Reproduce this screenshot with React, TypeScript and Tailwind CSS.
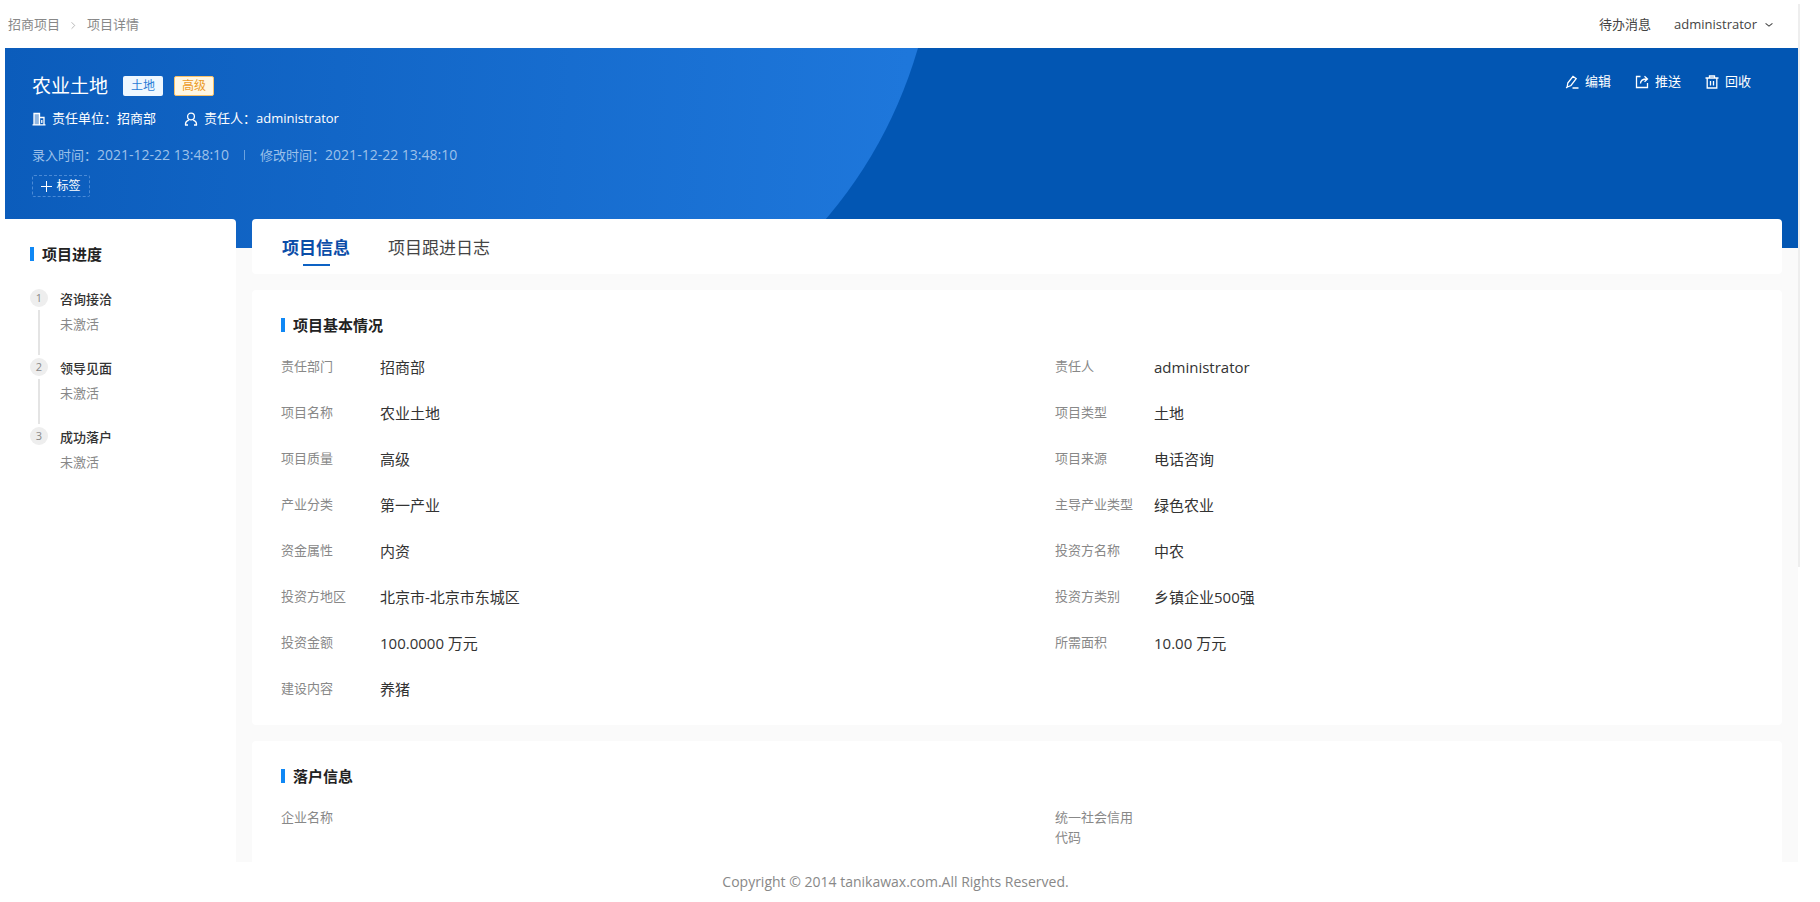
import { useState, type ReactNode } from "react";

type Field = { label: string; value?: string };

type IconProps = { children: ReactNode; size?: number };

const basicFields: Field[] = [
  { label: "责任部门", value: "招商部" },
  { label: "责任人", value: "administrator" },
  { label: "项目名称", value: "农业土地" },
  { label: "项目类型", value: "土地" },
  { label: "项目质量", value: "高级" },
  { label: "项目来源", value: "电话咨询" },
  { label: "产业分类", value: "第一产业" },
  { label: "主导产业类型", value: "绿色农业" },
  { label: "资金属性", value: "内资" },
  { label: "投资方名称", value: "中农" },
  { label: "投资方地区", value: "北京市-北京市东城区" },
  { label: "投资方类别", value: "乡镇企业500强" },
  { label: "投资金额", value: "100.0000 万元" },
  { label: "所需面积", value: "10.00 万元" },
  { label: "建设内容", value: "养猪" },
];

const settleFields: Field[] = [{ label: "企业名称" }, { label: "统一社会信用代码" }];

const steps = ["咨询接洽", "领导见面", "成功落户"];

const tabs = ["项目信息", "项目跟进日志"];

function Icon({ children, size = 14 }: IconProps) {
  return (
    <svg
      width={size}
      height={size}
      viewBox="0 0 14 14"
      fill="none"
      stroke="currentColor"
      strokeWidth="1.3"
      aria-hidden="true"
      className="shrink-0"
    >
      {children}
    </svg>
  );
}

function SectionTitle({ children }: { children: ReactNode }) {
  return (
    <h2 className="flex items-center gap-2 text-[15px] leading-6 font-bold text-[#222]">
      <span className="h-[14px] w-1 bg-[#1088f5]" />
      {children}
    </h2>
  );
}

function FieldGrid({ fields }: { fields: Field[] }) {
  return (
    <dl className="mt-[18px] grid grid-cols-2 gap-x-[76px] gap-y-[22px]">
      {fields.map((f) => (
        <div key={f.label} className="flex min-h-6 gap-[19px]">
          <dt className="w-20 shrink-0 pt-px text-[13px] leading-5 text-[#888]">{f.label}</dt>
          <dd className="text-[15px] leading-6 text-[#333]">{f.value}</dd>
        </div>
      ))}
    </dl>
  );
}

function TopBar() {
  return (
    <header className="flex h-12 items-center justify-between pt-0.5 pr-[25px] pl-[3px] text-[13px]">
      <nav aria-label="breadcrumb" className="flex items-center gap-[9px] text-[#888]">
        <a href="#projects">招商项目</a>
        <Icon size={9}>
          <path d="M4 2l5 5-5 5" stroke="#aaa" />
        </Icon>
        <span>项目详情</span>
      </nav>
      <div className="flex items-center gap-[23px] text-[#444]">
        <a href="#todo">待办消息</a>
        <button type="button" className="flex items-center gap-2">
          administrator
          <Icon size={8}>
            <path d="M1 4l6 5 6-5" strokeWidth="1.800" />
          </Icon>
        </button>
      </div>
    </header>
  );
}

function Banner() {
  return (
    <section className="relative h-[200px] overflow-hidden bg-[#0256b3] text-white">
      <svg width="914" height="200" viewBox="0 0 914 200" className="absolute top-0 left-0" aria-hidden="true">
        <defs>
          <linearGradient id="banner-shade" gradientUnits="userSpaceOnUse" x1="0" y1="0" x2="900" y2="60">
            <stop offset="0" stopColor="#0b5cbb" />
            <stop offset="1" stopColor="#1e77db" />
          </linearGradient>
        </defs>
        <path d="M0 0H913A467 467 0 0 1 794 200H0Z" fill="url(#banner-shade)" />
      </svg>

      <div className="relative flex justify-between pr-[47px] pl-[27px]">
        <div className="pt-[25px]">
          <div className="flex h-[26px] items-center gap-[11px]">
            <h1 className="mr-1 text-[19px] leading-[26px]">农业土地</h1>
            <span className="flex h-5 w-10 items-center justify-center rounded-xs bg-[#eef7ff] text-xs text-[#2a7cd6]">
              土地
            </span>
            <span className="flex h-5 w-10 items-center justify-center rounded-xs border border-[#f7c169] bg-[#fff7e4] text-xs text-[#eb9a26]">
              高级
            </span>
          </div>

          <div className="mt-[10px] flex h-5 items-center gap-7 text-[13px]">
            <span className="flex items-center gap-[6px]">
              <Icon>
                <path d="M2 13V1.500h5.500V13" fill="currentColor" fillOpacity="0.55" />
                <path d="M7.500 5.500H12V13M0.500 12.800h13M9.800 8v3" />
              </Icon>
              责任单位：招商部
            </span>
            <span className="flex items-center gap-[6px]">
              <Icon>
                <circle cx="7" cy="4.500" r="3.400" />
                <path d="M1.500 13.200V12c0-2 1.500-3.200 3.300-3.800M12.500 13.200V12c0-2-1.500-3.200-3.300-3.800M1 13h3M10 13h3" />
              </Icon>
              责任人：administrator
            </span>
          </div>

          <div className="mt-4 flex h-5 items-center gap-[15px] text-[13px] text-[#9dc1ea]">
            <span>
              录入时间：<time className="text-sm">2021-12-22 13:48:10</time>
            </span>
            <span className="h-[10px] w-px bg-[#6ba2df]" />
            <span>
              修改时间：<time className="text-sm">2021-12-22 13:48:10</time>
            </span>
          </div>

          <button
            type="button"
            className="mt-[10px] flex h-[22px] w-[58px] items-center justify-center gap-1 rounded-xs border border-dashed border-[#4a8ad6] text-xs"
          >
            <Icon size={11}>
              <path d="M7 0v14M0 7h14" />
            </Icon>
            标签
          </button>
        </div>

        <div className="mt-6 flex h-5 items-center gap-[24px] text-[13px]">
          <button type="button" className="flex items-center gap-[6px]">
            <Icon>
              <path d="M2.800 8L8 1.300l3.200 2.400-5.200 6.800-3.800 1.500zM7.500 13h6M2.200 12L1.200 13" />
            </Icon>
            编辑
          </button>
          <button type="button" className="flex items-center gap-[6px]">
            <Icon>
              <path d="M5.500 1.500H1.500v11h11V8M5.500 8.500c0-3 2-4.500 6.500-4.500M9.500 1.200L12.500 4l-3 2.800" />
            </Icon>
            推送
          </button>
          <button type="button" className="flex items-center gap-[6px]">
            <Icon>
              <path d="M0.500 3h13M4.500 3V1h5v2M2.200 3v10h9.600V3M5.500 6v4.500M8.500 6v4.500" />
            </Icon>
            回收
          </button>
        </div>
      </div>
    </section>
  );
}

function Progress() {
  return (
    <aside className="w-[231px] shrink-0 rounded-tr-sm bg-white px-[25px] pt-[23px]">
      <SectionTitle>项目进度</SectionTitle>
      <ol className="mt-[23px]">
        {steps.map((s, i) => (
          <li key={s} className="flex h-[69px] gap-3">
            <div className="flex w-[18px] flex-col items-center gap-[3px]">
              <span className="flex size-[18px] shrink-0 items-center justify-center rounded-full bg-[#eee] text-[11px] text-[#888]">
                {i + 1}
              </span>
              {i < steps.length - 1 && <span className="mb-[3px] w-0.5 flex-1 bg-[#e4e4e4]" />}
            </div>
            <div className="text-[13px] leading-5">
              <p className="font-medium text-[#333]">{s}</p>
              <p className="mt-[5px] text-[#888]">未激活</p>
            </div>
          </li>
        ))}
      </ol>
    </aside>
  );
}

export default function App() {
  const [tab, setTab] = useState(0);

  return (
    <div className="relative flex min-h-screen flex-col bg-white pr-[22px] pl-[5px] font-['Open_Sans','Noto_Sans_CJK_SC',sans-serif]">
      <div className="absolute top-1 right-5 h-[563px] w-0.5 bg-[#eee]" />
      <TopBar />
      <div className="flex flex-1 flex-col bg-[#fafafa]">
        <Banner />
        <div className="relative -mt-[29px] flex flex-1 gap-4 pr-4">
          <Progress />
          <main className="flex min-w-0 flex-1 flex-col gap-4">
            <div role="tablist" className="flex h-[55px] gap-[38px] rounded-sm bg-white px-[30px] pt-4">
              {tabs.map((t, i) => (
                <button
                  key={t}
                  type="button"
                  role="tab"
                  aria-selected={tab === i}
                  onClick={() => setTab(i)}
                  className={`flex flex-col items-center gap-[3px] text-[17px] leading-[26px] ${
                    tab === i ? "font-bold text-[#0b4da8]" : "text-[#444]"
                  }`}
                >
                  {t}
                  {tab === i && <span className="h-0.5 w-[27px] bg-[#0d62c4]" />}
                </button>
              ))}
            </div>

            <section className="rounded-sm bg-white px-[29px] pt-[23px] pb-6">
              <SectionTitle>项目基本情况</SectionTitle>
              <FieldGrid fields={basicFields} />
            </section>

            <section className="flex-1 rounded-t-sm bg-white px-[29px] pt-[23px]">
              <SectionTitle>落户信息</SectionTitle>
              <FieldGrid fields={settleFields} />
            </section>
          </main>
        </div>
      </div>
      <footer className="flex h-10 items-center justify-center pr-3 text-sm text-[#888]">
        Copyright © 2014 tanikawax.com.All Rights Reserved.
      </footer>
    </div>
  );
}
